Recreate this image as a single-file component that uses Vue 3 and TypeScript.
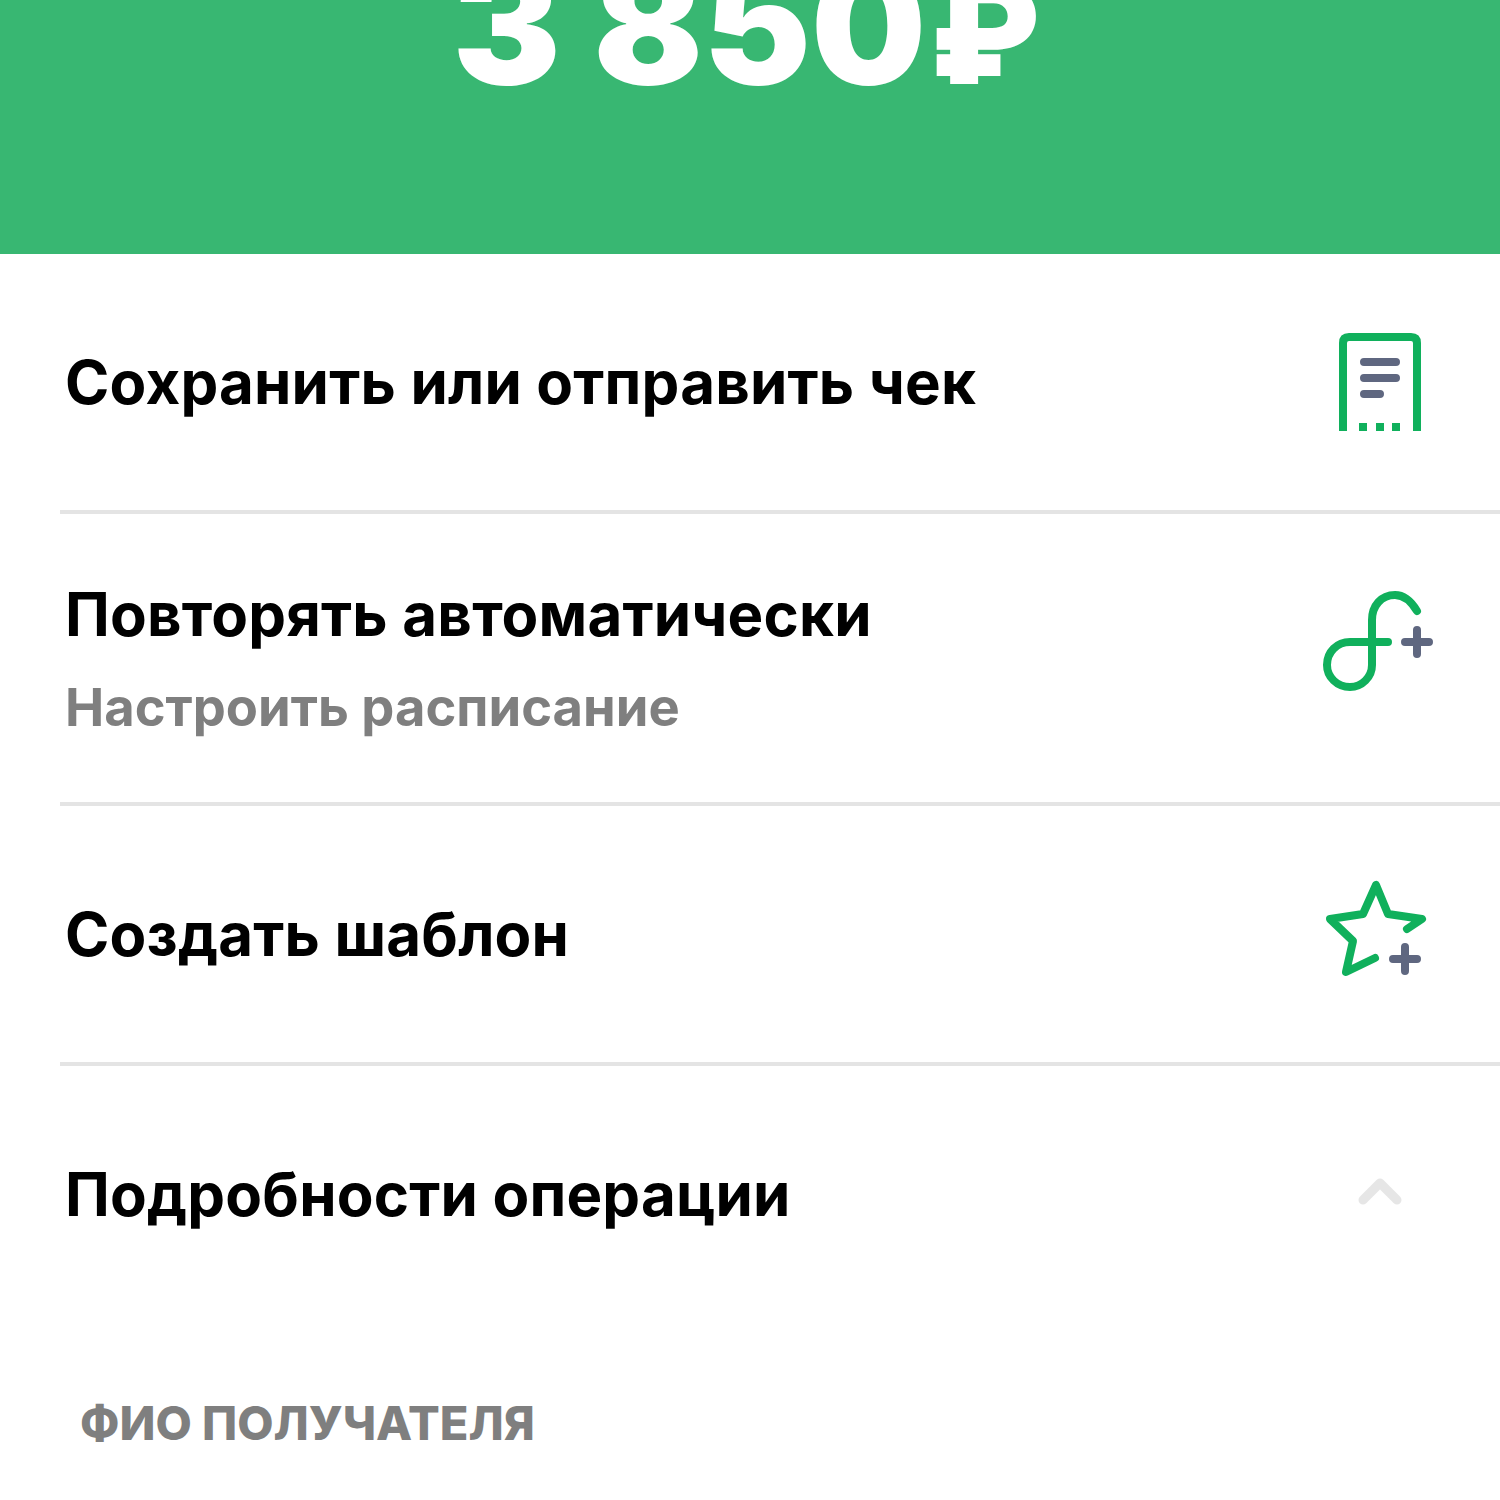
<script setup lang="ts">
// rows of the operation result screen
</script>

<template>
  <div class="page">
    <header class="hero">
      <div class="amount">3 850<span class="rub">₽</span></div>
    </header>

    <section class="row row-check">
      <div class="title">Сохранить или отправить чек</div>
      <svg class="icon" width="120" height="120" viewBox="0 0 120 120" fill="none">
        <path class="green" stroke-linecap="butt" d="M23 109V21Q23 15 29 15H91Q97 15 97 21V109" />
        <path class="slate" d="M44 40H76M44 56H76M44 72H60" stroke-width="7" />
        <path class="green" stroke-linecap="butt" d="M39 105H47M56 105H64M72 105H80" />
      </svg>
    </section>

    <section class="row row-repeat">
      <div>
        <div class="title">Повторять автоматически</div>
        <div class="sub">Настроить расписание</div>
      </div>
      <svg class="icon icon-up" width="120" height="120" viewBox="0 0 120 120" fill="none">
        <path class="green" stroke-linecap="round" d="M97 30C91 20 84 14 75 14C61 14 52 25 52 39V84C52 96 42 106 30 106C17 106 7 96 7 84C7 71 17 61 30 61H68" />
        <path class="slate" d="M97 49V73M85 61H109" />
      </svg>
    </section>

    <section class="row row-template">
      <div class="title">Создать шаблон</div>
      <svg class="icon" width="120" height="120" viewBox="0 0 120 120" fill="none">
        <path class="green" stroke-linejoin="round" stroke-linecap="round" d="M87 55L102 45L68 40L56 11L43 40L10 45L33 67L26 98L55 84" />
        <path class="slate" d="M85 73V97M73 85H97" />
      </svg>
    </section>

    <section class="row row-details">
      <div class="title">Подробности операции</div>
      <svg class="icon" width="120" height="60" viewBox="0 0 120 60" fill="none">
        <path d="M43 36L60 19L77 36" stroke="#e6e6e6" stroke-width="9" stroke-linecap="round" stroke-linejoin="round" />
      </svg>
    </section>

    <div class="label">ФИО ПОЛУЧАТЕЛЯ</div>
  </div>
</template>

<style scoped>
.page {
  width: 1500px;
  height: 1500px;
  overflow: hidden;
  background: #fff;
  color: #000;
  font-family: Inter, "Liberation Sans", sans-serif;
}

.hero {
  height: 254px;
  background: #38b772;
  display: flex;
  justify-content: center;
  align-items: flex-end;
  overflow: hidden;
}

.amount {
  color: #fff;
  font-size: 162px;
  font-weight: 900;
  line-height: 192px;
  margin-bottom: 126px;
  white-space: nowrap;
}

.rub {
  font-size: 142px;
  margin: 0 8px 0 3px;
}

.row {
  margin-left: 60px;
  padding: 0 60px 0 5px;
  display: flex;
  justify-content: space-between;
  align-items: center;
  border-bottom: 4px solid #e4e4e4;
}

.row-check {
  height: 256px;
}

.row-repeat {
  height: 288px;
}

.row-template {
  height: 256px;
}

.row-details {
  height: 256px;
  border-bottom: none;
}

.title {
  font-size: 60px;
  font-weight: 700;
  line-height: 70px;
  letter-spacing: 0.2px;
}

.sub {
  margin-top: 28px;
  font-size: 52.5px;
  font-weight: 700;
  line-height: 60px;
  color: #7f7f7f;
}

.icon {
  flex: none;
}

.icon-up {
  margin-bottom: 34px;
}

.green {
  stroke: #10b05c;
  stroke-width: 8;
}

.slate {
  stroke: #5f6780;
  stroke-width: 8;
  stroke-linecap: round;
}

.label {
  margin: 73px 0 0 80px;
  font-size: 47px;
  font-weight: 800;
  line-height: 56px;
  color: #7f7f7f;
}
</style>
